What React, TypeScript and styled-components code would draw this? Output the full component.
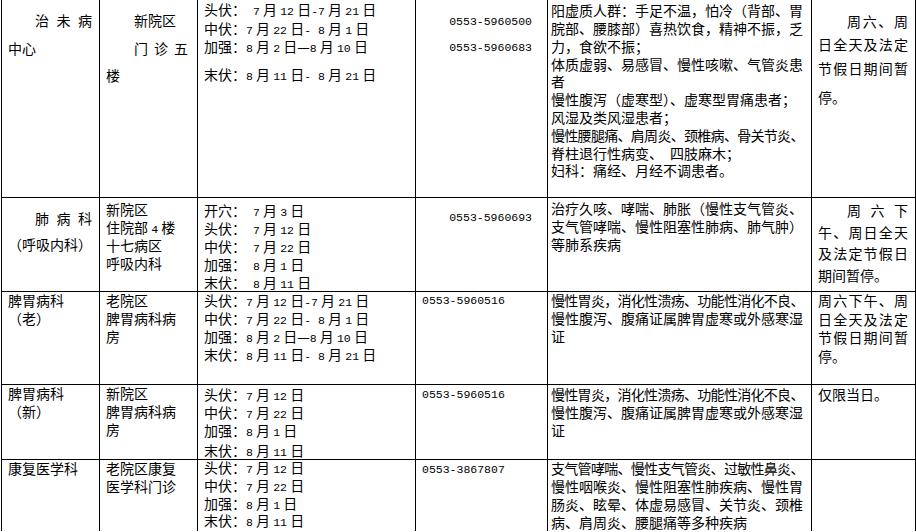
import styled, { createGlobalStyle } from "styled-components";

const GlobalStyle = createGlobalStyle`
  * { box-sizing: border-box; }
  body { margin: 0; background: #fff; }
`;

const columns = "98px 98px 218px 132px 264px 104px";

const Sheet = styled.div`
  margin-left: 1px;
  width: 915px;
  border-left: 1px solid #000;
  font-family: "Noto Sans CJK SC", sans-serif;
  font-size: 14px;
  color: #000;
`;

const Row = styled.div<{ $h: number }>`
  display: grid;
  grid-template-columns: ${columns};
  height: ${(p) => p.$h}px;
`;

const Cell = styled.div<{
  $pt?: number;
  $lh?: number;
  $pl?: number;
  $pr?: number;
  $right?: boolean;
}>`
  border-right: 1px solid #000;
  border-bottom: 1px solid #000;
  padding: ${(p) => p.$pt ?? 0}px ${(p) => p.$pr ?? 6}px 0 ${(p) => p.$pl ?? 6}px;
  line-height: ${(p) => p.$lh ?? 18}px;
  text-align: ${(p) => (p.$right ? "right" : "left")};
`;

type LineProps = {
  $indent?: number;
  $spread?: boolean;
  $gap?: number;
  $tight?: boolean;
};

const Line = styled.div<LineProps>`
  margin-left: ${(p) => p.$indent ?? 0}px;
  margin-top: ${(p) => p.$gap ?? 0}px;
  white-space: ${(p) => (p.$spread ? "normal" : "nowrap")};
  text-align-last: ${(p) => (p.$spread ? "justify" : "auto")};
  letter-spacing: ${(p) => (p.$tight ? "-0.7px" : "normal")};
`;

const Num = styled.span`
  font-family: "Liberation Mono", monospace;
  font-size: 11.5px;
  line-height: 1;
`;

// digits and hyphens are set narrow, like the half-width Latin of the source
const withNums = (s: string) =>
  s.split(/([0-9-]+)/).map((part, i) =>
    /^[0-9-]+$/.test(part) ? <Num key={i}>{part}</Num> : part
  );

const L = ({ t, ...rest }: { t: string } & LineProps) => (
  <Line {...rest}>{withNums(t)}</Line>
);

const E = "\u2002";

export default function App() {
  return (
    <>
      <GlobalStyle />
      <Sheet>
        <Row $h={198}>
          <Cell $pt={7} $lh={27.5} $pr={7}>
            <L t="治未病" $indent={27} $spread />
            <L t="中心" />
          </Cell>
          <Cell $pt={7} $lh={27.5} $pr={9}>
            <L t="新院区" $indent={28} />
            <L t="门诊五" $indent={28} $spread />
            <L t="楼" />
          </Cell>
          <Cell $pt={0} $lh={18.5}>
            <L t={`头伏：${E}7 月 12 日-7 月 21 日`} />
            <L t={`中伏：7 月 22 日-${E}8 月 1 日`} />
            <L t="加强：8 月 2 日—8 月 10 日" />
            <L t={`末伏：8 月 11 日-${E}8 月 21 日`} $gap={9.5} />
          </Cell>
          <Cell $pt={5.5} $lh={26.5} $pr={15} $right>
            <L t="0553-5960500" />
            <L t="0553-5960683" />
          </Cell>
          <Cell $pt={2.3} $lh={17.8} $pl={3} $pr={2}>
            <L t="阳虚质人群：手足不温，怕冷（背部、胃" />
            <L t="脘部、腰膝部）喜热饮食，精神不振，乏" />
            <L t="力，食欲不振；" />
            <L t="体质虚弱、易感冒、慢性咳嗽、气管炎患" />
            <L t="者" />
            <L t="慢性腹泻（虚寒型）、虚寒型胃痛患者；" />
            <L t="风湿及类风湿患者；" />
            <L t="慢性腰腿痛、肩周炎、颈椎病、骨关节炎、" $tight />
            <L t={`脊柱退行性病变、${E}四肢麻木；`} />
            <L t="妇科：痛经、月经不调患者。" />
          </Cell>
          <Cell $pt={9.5} $lh={23.5} $pr={7}>
            <L t="周六、周" $indent={29} $spread />
            <L t="日全天及法定" $spread />
            <L t="节假日期间暂" $spread />
            <L t="停。" $gap={5.5} />
          </Cell>
        </Row>

        <Row $h={93}>
          <Cell $pt={7} $lh={26} $pr={7}>
            <L t="肺病科" $indent={27} $spread />
            <L t="（呼吸内科）" />
          </Cell>
          <Cell $pt={1.6} $lh={18.2}>
            <L t="新院区" />
            <L t="住院部 4 楼" />
            <L t="十七病区" />
            <L t="呼吸内科" />
          </Cell>
          <Cell $pt={3} $lh={18}>
            <L t={`开穴：${E}7 月 3 日`} />
            <L t={`头伏：${E}7 月 12 日`} />
            <L t={`中伏：${E}7 月 22 日`} />
            <L t={`加强：${E}8 月 1 日`} />
            <L t={`末伏：${E}8 月 11 日`} />
          </Cell>
          <Cell $pt={7.5} $lh={18} $pr={15} $right>
            <L t="0553-5960693" />
          </Cell>
          <Cell $pt={2.3} $lh={17.7} $pl={3} $pr={2}>
            <L t="治疗久咳、哮喘、肺胀（慢性支气管炎、" />
            <L t="支气管哮喘、慢性阻塞性肺病、肺气肿）" />
            <L t="等肺系疾病" />
          </Cell>
          <Cell $pt={1.8} $lh={21.7} $pr={7}>
            <L t="周六下" $indent={29} $spread />
            <L t="午、周日全天" $spread />
            <L t="及法定节假日" $spread />
            <L t="期间暂停。" />
          </Cell>
        </Row>

        <Row $h={94}>
          <Cell $lh={18}>
            <L t="脾胃病科" />
            <L t="（老）" />
          </Cell>
          <Cell $lh={18}>
            <L t="老院区" />
            <L t="脾胃病科病" />
            <L t="房" />
          </Cell>
          <Cell $lh={18}>
            <L t="头伏：7 月 12 日-7 月 21 日" />
            <L t={`中伏：7 月 22 日-${E}8 月 1 日`} />
            <L t="加强：8 月 2 日—8 月 10 日" />
            <L t={`末伏：8 月 11 日-${E}8 月 21 日`} />
          </Cell>
          <Cell $lh={14}>
            <L t="0553-5960516" />
          </Cell>
          <Cell $lh={18} $pl={3} $pr={2}>
            <L t="慢性胃炎，消化性溃疡、功能性消化不良、" $tight />
            <L t="慢性腹泻、腹痛证属脾胃虚寒或外感寒湿" />
            <L t="证" />
          </Cell>
          <Cell $lh={18.5} $pr={7}>
            <L t="周六下午、周" $spread />
            <L t="日全天及法定" $spread />
            <L t="节假日期间暂" $spread />
            <L t="停。" />
          </Cell>
        </Row>

        <Row $h={74}>
          <Cell $lh={17.8}>
            <L t="脾胃病科" />
            <L t="（新）" />
          </Cell>
          <Cell $lh={17.8}>
            <L t="新院区" />
            <L t="脾胃病科病" />
            <L t="房" />
          </Cell>
          <Cell $lh={18}>
            <L t="头伏：7 月 12 日" />
            <L t="中伏：7 月 22 日" />
            <L t="加强：8 月 1 日" />
            <L t="末伏：8 月 11 日" $gap={1.5} />
          </Cell>
          <Cell $lh={14}>
            <L t="0553-5960516" />
          </Cell>
          <Cell $lh={18} $pl={3} $pr={2}>
            <L t="慢性胃炎，消化性溃疡、功能性消化不良、" $tight />
            <L t="慢性腹泻、腹痛证属脾胃虚寒或外感寒湿" />
            <L t="证" />
          </Cell>
          <Cell $lh={18} $pr={7}>
            <L t="仅限当日。" />
          </Cell>
        </Row>

        <Row $h={72}>
          <Cell $lh={18}>
            <L t="康复医学科" />
          </Cell>
          <Cell $lh={18}>
            <L t="老院区康复" />
            <L t="医学科门诊" />
          </Cell>
          <Cell $lh={17.8}>
            <L t="头伏：7 月 12 日" />
            <L t="中伏：7 月 22 日" />
            <L t="加强：8 月 1 日" />
            <L t="末伏：8 月 11 日" />
          </Cell>
          <Cell $pt={0.5} $lh={14}>
            <L t="0553-3867807" />
          </Cell>
          <Cell $lh={18} $pl={3} $pr={2}>
            <L t="支气管哮喘、慢性支气管炎、过敏性鼻炎、" $tight />
            <L t="慢性咽喉炎、慢性阻塞性肺疾病、慢性胃" />
            <L t="肠炎、眩晕、体虚易感冒、关节炎、颈椎" />
            <L t="病、肩周炎、腰腿痛等多种疾病" />
          </Cell>
          <Cell />
        </Row>
      </Sheet>
    </>
  );
}
